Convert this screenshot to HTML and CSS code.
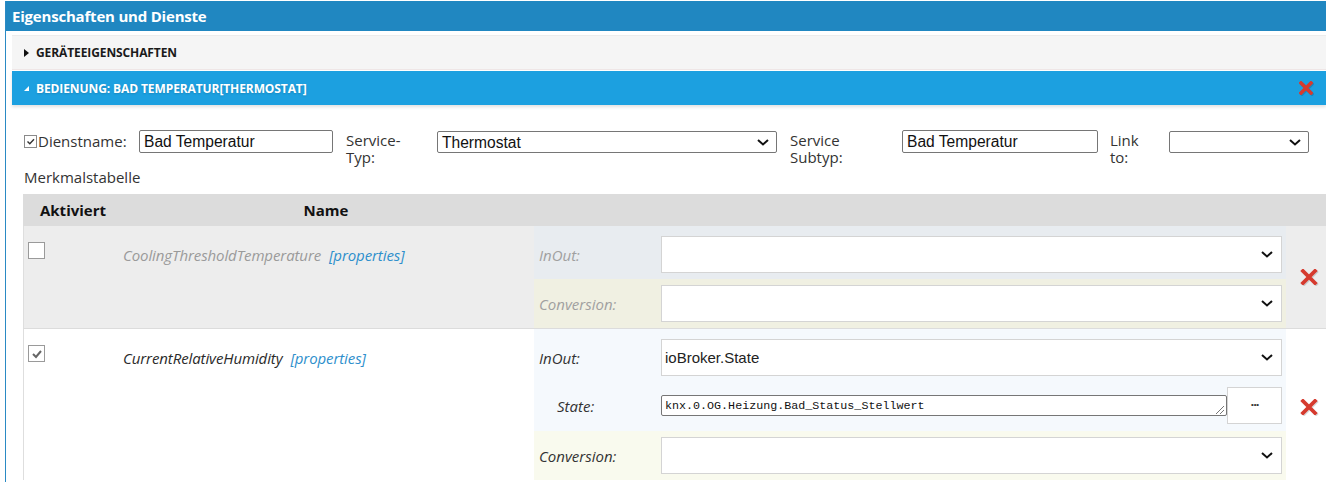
FILE: index.html
```html
<!DOCTYPE html>
<html lang="de">
<head>
<meta charset="utf-8">
<title>Eigenschaften und Dienste</title>
<link rel="stylesheet" href="styles.css">
</head>
<body>
<div class="panel">
  <div class="panel-title">Eigenschaften und Dienste</div>
  <div class="panel-body">
    <div class="acc-header acc-collapsed">
      <svg class="tri" width="5" height="8" viewBox="0 0 5 8"><path d="M0 0 L5 4 L0 8 Z" fill="#111"/></svg>
      <span>Geräteeigenschaften</span>
    </div>
    <div class="acc-header acc-active">
      <svg class="tri" width="5" height="5" viewBox="0 0 5 5"><path d="M5 0 L5 5 L0 5 Z" fill="#fff"/></svg>
      <span class="acc-text">Bedienung: Bad Temperatur[Thermostat]</span>
      <svg class="xicon xicon-head" width="14" height="14" viewBox="0 0 14 14"><path d="M2 2 L12 12 M12 2 L2 12" stroke="#d63a2e" stroke-width="3.6" stroke-linecap="square"/></svg>
    </div>
    <div class="acc-content">
      <div class="form-row">
        <div class="flabel flabel-first">
          <span class="cb-small"><svg width="11" height="11" viewBox="0 0 11 11"><path d="M2.5 5.5 L4.8 7.8 L9 3.3" fill="none" stroke="#333" stroke-width="1.4"/></svg></span>
          <span>Dienstname:</span>
        </div>
        <div class="tinput w-name">Bad Temperatur</div>
        <div class="flabel w-l2"><div>Service-</div><div>Typ:</div></div>
        <div class="tselect w-type"><span>Thermostat</span><svg class="chev" width="12" height="7" viewBox="0 0 12 7"><path d="M1 1 L6 5.5 L11 1" fill="none" stroke="#111" stroke-width="2"/></svg></div>
        <div class="flabel w-l3"><div>Service</div><div>Subtyp:</div></div>
        <div class="tinput w-sub">Bad Temperatur</div>
        <div class="flabel w-l4"><div>Link</div><div>to:</div></div>
        <div class="tselect w-link"><span></span><svg class="chev" width="12" height="7" viewBox="0 0 12 7"><path d="M1 1 L6 5.5 L11 1" fill="none" stroke="#111" stroke-width="2"/></svg></div>
      </div>
      <div class="caption">Merkmalstabelle</div>
      <div class="ctable">
        <div class="crow chead">
          <div class="c1">Aktiviert</div>
          <div class="c2">Name</div>
          <div class="c3"></div>
          <div class="c4"></div>
        </div>
        <div class="crow crow-off">
          <div class="c1"><span class="cb"></span></div>
          <div class="c2"><span class="cname">CoolingThresholdTemperature</span><span class="props">[properties]</span></div>
          <div class="c3">
            <div class="sub sub-inout first">
              <div class="slabel">InOut:</div>
              <div class="bselect"><span></span><svg class="chev" width="12" height="7" viewBox="0 0 12 7"><path d="M1 1 L6 5.5 L11 1" fill="none" stroke="#111" stroke-width="2"/></svg></div>
            </div>
            <div class="sub sub-conv">
              <div class="slabel">Conversion:</div>
              <div class="bselect"><span></span><svg class="chev" width="12" height="7" viewBox="0 0 12 7"><path d="M1 1 L6 5.5 L11 1" fill="none" stroke="#111" stroke-width="2"/></svg></div>
            </div>
          </div>
          <div class="c4"><svg class="xicon" width="18" height="16" viewBox="0 0 18 16"><path d="M3 2 L15 14 M15 2 L3 14" stroke="#d63a2e" stroke-width="3.8" stroke-linecap="square"/></svg></div>
        </div>
        <div class="crow crow-on">
          <div class="c1"><span class="cb"><svg width="14" height="14" viewBox="0 0 14 14"><path d="M3 7 L6 10 L11 4" fill="none" stroke="#666" stroke-width="2"/></svg></span></div>
          <div class="c2"><span class="cname">CurrentRelativeHumidity</span><span class="props">[properties]</span></div>
          <div class="c3">
            <div class="sub sub-inout first">
              <div class="slabel">InOut:</div>
              <div class="bselect"><span>ioBroker.State</span><svg class="chev" width="12" height="7" viewBox="0 0 12 7"><path d="M1 1 L6 5.5 L11 1" fill="none" stroke="#111" stroke-width="2"/></svg></div>
              <div class="slabel slabel-ind state-label">State:</div>
              <div class="state-wrap">
                <div class="state-box">
                  <span class="state-text">knx.0.OG.Heizung.Bad_Status_Stellwert</span>
                  <svg class="grip" width="11" height="11" viewBox="0 0 11 11"><path d="M10 2 L2 10 M10 6 L6 10" stroke="#777" stroke-width="1"/></svg>
                </div>
                <div class="dots-btn">···</div>
              </div>
            </div>
            <div class="sub sub-conv">
              <div class="slabel">Conversion:</div>
              <div class="bselect"><span></span><svg class="chev" width="12" height="7" viewBox="0 0 12 7"><path d="M1 1 L6 5.5 L11 1" fill="none" stroke="#111" stroke-width="2"/></svg></div>
            </div>
          </div>
          <div class="c4"><svg class="xicon" width="18" height="16" viewBox="0 0 18 16"><path d="M3 2 L15 14 M15 2 L3 14" stroke="#d63a2e" stroke-width="3.8" stroke-linecap="square"/></svg></div>
        </div>
      </div>
    </div>
  </div>
</div>
</body>
</html>
```
FILE: styles.css
```css
html, body {
  margin: 0;
  padding: 0;
  background: #fff;
  overflow: hidden;
}
body {
  font-family: "Open Sans", "Noto Sans", sans-serif;
  color: #222;
}
.panel {
  margin: 1px 0 0 5px;
  border-left: 1px solid #2a8ac4;
  height: 481px;
}
.panel-title {
  background: #2087c1;
  color: #fff;
  font-weight: bold;
  font-size: 15px;
  height: 30px;
  line-height: 30px;
  padding-left: 6px;
  letter-spacing: -0.2px;
}
.panel-body {
  padding: 4px 0 0 6px;
}
.acc-header {
  display: flex;
  align-items: center;
  font-size: 12px;
  font-weight: bold;
  text-transform: uppercase;
  padding-left: 12px;
  position: relative;
  letter-spacing: -0.1px;
}
.acc-header .tri {
  margin-right: 7px;
}
.acc-collapsed {
  background: #f5f5f5;
  border-top: 1px solid #ececec;
  border-bottom: 1px solid #efe6e6;
  height: 33px;
  color: #1a1a1a;
}
.acc-active {
  margin-top: 1px;
  background: #1ca0e0;
  color: #fff;
  height: 34px;
  box-shadow: 0 2px 3px rgba(0, 0, 0, 0.12);
}
.acc-active .acc-text {
  text-shadow: 0 1px 2px rgba(0, 0, 0, 0.15);
}
.xicon-head {
  position: absolute;
  right: 13px;
  top: 10px;
  filter: drop-shadow(1px 2px 1px rgba(0, 0, 0, 0.3));
}
.acc-content {
  padding: 25px 0 0 11px;
}
.form-row {
  display: flex;
  align-items: flex-start;
  height: 37px;
  padding-left: 1px;
}
.flabel {
  font-size: 15px;
  line-height: 17px;
  padding-top: 2px;
  color: #333;
  box-sizing: border-box;
  letter-spacing: 0;
}
.flabel > div {
  height: 17px;
  overflow: visible;
}
.flabel-first {
  display: flex;
  align-items: center;
  width: 115px;
  padding-top: 3px;
}
.cb-small {
  width: 11px;
  height: 11px;
  border: 1px solid #8a8a8a;
  display: inline-block;
  margin-right: 1px;
}
.cb-small svg {
  display: block;
}
.tinput, .tselect {
  box-sizing: border-box;
  height: 23px;
  border: 1px solid #767676;
  border-radius: 2px;
  font-family: "Liberation Sans", Arial, sans-serif;
  font-size: 15.6px;
  line-height: 21px;
  padding-left: 4px;
  color: #111;
  background: #fff;
}
.tselect {
  display: flex;
  justify-content: space-between;
  align-items: center;
  height: 22px;
  margin-top: 1px;
  padding-right: 7px;
}
.w-name { width: 194px; }
.w-l2 { width: 91px; margin-left: 13px; }
.w-type { width: 340px; }
.w-l3 { width: 112px; margin-left: 13px; }
.w-sub { width: 196px; }
.w-l4 { width: 59px; margin-left: 12px; }
.w-link { width: 140px; }
.caption {
  font-size: 15px;
  line-height: 20px;
  color: #333;
  padding-left: 1px;
  height: 27px;
  letter-spacing: 0;
}
.crow {
  display: flex;
  border-left: 1px solid #dedede;
}
.crow > div {
  flex-shrink: 0;
  box-sizing: border-box;
}
.c1 { width: 94px; }
.c2 { width: 416px; }
.c3 { width: 752px; }
.c4 { width: 34px; }
.chead {
  background: #dcdcdc;
  border-left-color: #dcdcdc;
  height: 32px;
  font-weight: bold;
  font-size: 15px;
  line-height: 32px;
  color: #111;
}
.chead .c1, .chead .c2 {
  text-align: center;
}
.chead .c1 { padding-left: 4px; }
.crow-off {
  background: #ededed;
  border-bottom: 1px solid #dcdcdc;
}
.crow-on {
  background: #fff;
}
.crow-off .c1, .crow-on .c1 {
  padding: 16px 0 0 4px;
}
.cb {
  display: block;
  width: 17px;
  height: 17px;
  box-sizing: border-box;
  border: 1px solid #9a9a9a;
  background: #fff;
}
.cb svg { display: block; margin: 0.5px 0 0 0.5px; }
.crow-off .c2, .crow-on .c2 {
  padding: 18px 0 0 5px;
  font-size: 15px;
  font-style: italic;
  line-height: 22px;
  letter-spacing: -0.1px;
}
.cname { margin-right: 8px; }
.crow-off .cname { color: #9a9a9a; }
.crow-on .cname { color: #2a2a2a; }
.props { color: #2e8fcc; }
.sub {
  display: grid;
  grid-template-columns: 127px 621px;
  align-items: center;
  padding: 6px 0 6px 0;
}
.sub.first { padding-top: 10px; }
.crow-off .sub-inout { background: #e8ecf0; }
.crow-off .sub-conv { background: #f0f0e2; }
.crow-on .sub-inout { background: #f5f9fd; padding-bottom: 7px; }
.crow-on .sub-conv { background: #f9faee; }
.slabel {
  box-sizing: border-box;
  padding-left: 5px;
  font-size: 15px;
  font-style: italic;
  letter-spacing: 0;
}
.crow-off .slabel { color: #a0a0a0; }
.crow-on .slabel { color: #333; }
.slabel-ind { padding-left: 23px; }
.state-label, .state-wrap { margin-top: 11px; }
.bselect {
  height: 37px;
  box-sizing: border-box;
  border: 1px solid #d4d4d4;
  background: #fff;
  display: flex;
  align-items: center;
  justify-content: space-between;
  padding: 0 8px 0 3px;
  font-family: "Liberation Sans", Arial, sans-serif;
  font-size: 15px;
  color: #222;
}
.state-wrap {
  display: flex;
  align-items: center;
}
.state-box {
  width: 566px;
  height: 21px;
  box-sizing: border-box;
  border: 1px solid #767676;
  border-radius: 2px;
  background: #fff;
  display: flex;
  align-items: center;
  justify-content: space-between;
  padding: 0 1px 0 3px;
}
.state-text {
  font-family: "Liberation Mono", "DejaVu Sans Mono", monospace;
  font-size: 11.7px;
  color: #111;
}
.grip { align-self: flex-end; }
.dots-btn {
  width: 55px;
  height: 37px;
  box-sizing: border-box;
  border: 1px solid #d4d4d4;
  background: #fff;
  text-align: center;
  line-height: 33px;
  font-size: 13px;
  font-weight: bold;
  color: #333;
  letter-spacing: -1px;
}
.c4 {
  display: flex;
  align-items: center;
  padding-left: 14px;
}
.crow-on .c4 {
  align-items: flex-start;
  padding-top: 70px;
}
.xicon {
  filter: drop-shadow(1px 1px 0.5px rgba(0, 0, 0, 0.15));
}
```
